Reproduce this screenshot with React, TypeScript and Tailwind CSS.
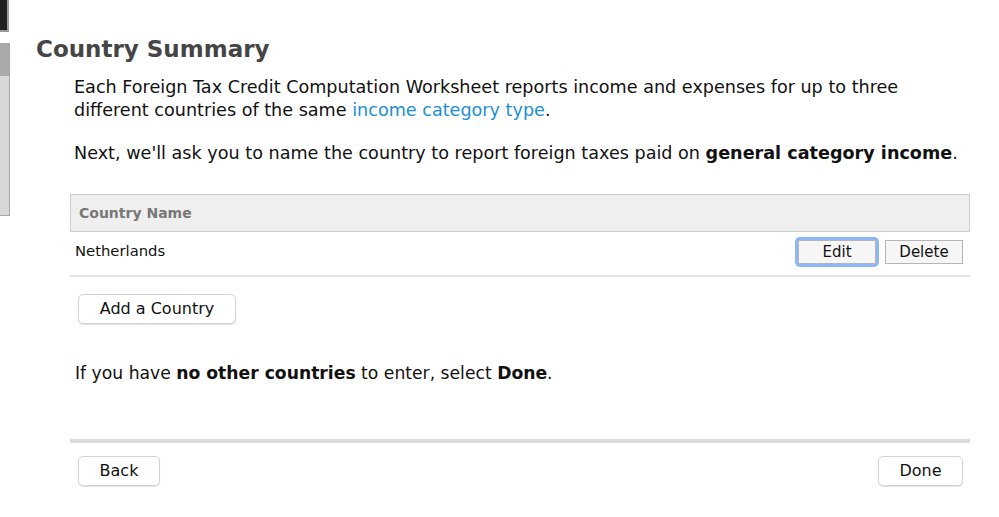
const font = { fontFamily: '"DejaVu Sans", "Lucida Grande", Verdana, sans-serif' };

const Button = ({ label, className = "" }: { label: string; className?: string }) => (
  <button
    className={
      "h-[30px] rounded-[5px] border border-[#d4d4d4] bg-white text-[16px] text-[#111] shadow-[0_1px_1px_rgba(0,0,0,0.12)] " +
      className
    }
  >
    {label}
  </button>
);

const App = () => {
  return (
    <div className="relative h-[517px] w-[999px] overflow-hidden bg-white text-[#111]" style={font}>
      {/* left edge leftovers of a sidebar */}
      <div className="absolute left-0 top-0 h-[32px] w-[9px] border-r-2 border-b-2 border-[#9a9a9a] bg-[#222]" />
      <div className="absolute left-0 top-[43px] flex h-[173px] w-[10px] flex-col border-r border-b border-t border-[#a8a8a8] bg-[#d8d8d8]">
        <div className="h-[32px] bg-[#aaaaaa]" />
      </div>

      <div className="pl-[36px] pr-[29px] pt-[34px]">
        <h1 className="text-[23px] font-bold leading-[30px] text-[#454545]">Country Summary</h1>

        <div className="pl-[38px] pt-[12px] text-[17.6px] leading-[23px]">
          <p>
            Each Foreign Tax Credit Computation Worksheet reports income and expenses for up to three
            <br />
            different countries of the same <span className="text-[#1a8fd6]">income category type</span>.
          </p>
          <p className="mt-[20px]">
            Next, we'll ask you to name the country to report foreign taxes paid on{" "}
            <b>general category income</b>.
          </p>
        </div>

        <div className="ml-[34px] mt-[29px]">
          <div className="flex h-[38px] items-center border border-[#cccccc] bg-[#efefef] pl-[8px] text-[14px] font-bold text-[#777]">
            Country Name
          </div>
          <div className="flex h-[45px] items-center border-b-2 border-[#e3e3e3] pl-[5px] text-[14.8px]">
            <span className="-mt-[4px] flex-1">Netherlands</span>
            <div className="-mt-[4px] mr-[6px] rounded-[5px] bg-[#8db6f5] p-[3px]">
              <button className="h-[24px] w-[78px] border border-[#b5b5b5] bg-[#f6f6f6] text-[15px]">Edit</button>
            </div>
            <button className="-mt-[4px] mr-[7px] h-[24px] w-[78px] border border-[#b5b5b5] bg-[#f6f6f6] text-[15px]">
              Delete
            </button>
          </div>

          <Button label="Add a Country" className="ml-[8px] mt-[17px] w-[158px]" />

          <p className="ml-[5px] mt-[38px] text-[17.2px] leading-[23px]">
            If you have <b>no other countries</b> to enter, select <b>Done</b>.
          </p>

          <div className="mt-[54px] h-[4px] bg-[#dcdcdc]" />

          <div className="mt-[13px] flex justify-between pl-[8px] pr-[7px]">
            <Button label="Back" className="w-[82px]" />
            <Button label="Done" className="w-[85px]" />
          </div>
        </div>
      </div>
    </div>
  );
};

export default App;
